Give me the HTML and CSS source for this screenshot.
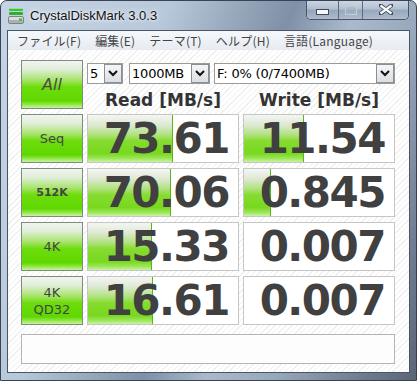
FILE: index.html
```html
<!DOCTYPE html>
<html>
<head>
<meta charset="utf-8">
<title>CrystalDiskMark 3.0.3</title>
<link rel="stylesheet" href="styles.css">
</head>
<body>
<div class="window">
  <div class="titlebar">
    <svg class="app-icon" width="16" height="16" viewBox="0 0 16 16">
      <rect x="1" y="0" width="14" height="3" rx="1" fill="#3cc23c"/>
      <rect x="1" y="0" width="14" height="1" fill="#8fe88f"/>
      <rect x="1" y="4" width="14" height="3" rx="1" fill="#2fae2f"/>
      <rect x="0.5" y="8.5" width="15" height="7" rx="1.5" fill="#d8dcdc" stroke="#7c8484"/>
      <rect x="1" y="12" width="14" height="3" fill="#a9b0b0"/>
      <rect x="11" y="10.5" width="3" height="2" fill="#22c022"/>
    </svg>
    <span class="title">CrystalDiskMark 3.0.3</span>
    <div class="caption">
      <div class="cbtn cmin">
        <svg width="13" height="6" viewBox="0 0 13 6"><rect x="0.5" y="0.5" width="12" height="5" fill="#fff" stroke="#3b4252"/></svg>
      </div>
      <div class="cbtn cmax">
        <svg width="12" height="10" viewBox="0 0 12 10"><rect x="0.5" y="0.5" width="11" height="9" fill="none" stroke="#c9cfd8"/><rect x="2" y="3" width="8" height="5" fill="none" stroke="#aab2be"/></svg>
      </div>
      <div class="cbtn cclose">
        <svg width="14" height="11" viewBox="0 0 14 11"><path d="M1 1 L13 10 M13 1 L1 10" stroke="#3b4252" stroke-width="4" stroke-linecap="square"/><path d="M1.5 1.5 L12.5 9.5 M12.5 1.5 L1.5 9.5" stroke="#fff" stroke-width="2.2"/></svg>
      </div>
    </div>
  </div>
  <div class="client">
    <div class="menubar">
      <span class="menu-item">ファイル(F)</span>
      <span class="menu-item">編集(E)</span>
      <span class="menu-item">テーマ(T)</span>
      <span class="menu-item">ヘルプ(H)</span>
      <span class="menu-item">言語(Language)</span>
    </div>
    <div class="content">
      <div class="grid">
        <div class="tbtn lbl-all">All</div>
        <div class="topbar">
          <div class="controls">
            <div class="combo combo-count"><span class="combo-text">5</span><span class="drop"><svg width="10" height="7" viewBox="0 0 10 7"><polyline points="1,1 5,5 9,1" fill="none" stroke="#111" stroke-width="2"/></svg></span></div>
            <div class="combo combo-size"><span class="combo-text">1000MB</span><span class="drop"><svg width="10" height="7" viewBox="0 0 10 7"><polyline points="1,1 5,5 9,1" fill="none" stroke="#111" stroke-width="2"/></svg></span></div>
            <div class="combo combo-drive"><span class="combo-text">F: 0% (0/7400MB)</span><span class="drop"><svg width="10" height="7" viewBox="0 0 10 7"><polyline points="1,1 5,5 9,1" fill="none" stroke="#111" stroke-width="2"/></svg></span></div>
          </div>
          <div class="heads">
            <div class="head">Read [MB/s]</div>
            <div class="head">Write [MB/s]</div>
          </div>
        </div>

        <div class="tbtn lbl-seq">Seq</div>
        <div class="cell"><div class="bar" style="width:85px"></div><span class="val">73.61</span></div>
        <div class="cell"><div class="bar" style="width:60px"></div><span class="val">11.54</span></div>

        <div class="tbtn lbl-512">512K</div>
        <div class="cell"><div class="bar" style="width:83px"></div><span class="val">70.06</span></div>
        <div class="cell"><div class="bar" style="width:27px"></div><span class="val">0.845</span></div>

        <div class="tbtn lbl-4k">4K</div>
        <div class="cell"><div class="bar" style="width:64px"></div><span class="val">15.33</span></div>
        <div class="cell"><span class="val">0.007</span></div>

        <div class="tbtn lbl-qd">4K<br>QD32</div>
        <div class="cell"><div class="bar" style="width:65px"></div><span class="val">16.61</span></div>
        <div class="cell"><span class="val">0.007</span></div>
      </div>
      <div class="comment"></div>
    </div>
  </div>
</div>
</body>
</html>
```

FILE: styles.css
```css
html, body {
  margin: 0;
  padding: 0;
}
body {
  width: 417px;
  height: 381px;
  overflow: hidden;
  background: #ffffff;
}
.window {
  width: 417px;
  height: 381px;
  box-sizing: border-box;
  border: 1px solid #3a4354;
  border-radius: 7px 7px 0 0;
  background: linear-gradient(112deg, #c6d5e5 0%, #b7c8da 30%, #8e9eb3 46%, #7f90a7 52%, #aab9cc 63%, #98a8bc 75%, #6f7c91 90%, #5b6577 100%);
  display: flex;
  flex-direction: column;
  overflow: hidden;
}
.titlebar {
  height: 29px;
  display: flex;
  align-items: flex-start;
  padding-left: 7px;
}
.app-icon {
  margin-top: 7px;
  flex: none;
}
.title {
  margin-left: 6px;
  margin-top: 7px;
  font-family: "Liberation Sans", Arial, sans-serif;
  font-size: 13px;
  line-height: 16px;
  color: #111;
  text-shadow: 0 0 6px rgba(255,255,255,0.95), 0 0 3px rgba(255,255,255,0.9);
}
.caption {
  margin-left: auto;
  margin-right: 7px;
  margin-top: -1px;
  height: 19px;
  display: flex;
  border: 1px solid #4b5466;
  border-top: none;
  border-radius: 0 0 5px 5px;
  overflow: hidden;
  box-shadow: inset 0 0 0 1px rgba(255,255,255,0.35);
}
.cbtn {
  height: 19px;
  display: flex;
  align-items: center;
  justify-content: center;
  background: linear-gradient(#d3dce8 0%, #b6c3d4 45%, #98a8bd 55%, #aebcce 100%);
  opacity: 0.92;
}
.cmin { width: 31px; border-right: 1px solid #58627a; }
.cmin svg { margin-top: 5px; }
.cmax { width: 23px; border-right: 1px solid #58627a; }
.cclose { width: 45px; }

.client {
  margin-left: 6px;
  width: 403px;
  height: 343px;
  box-sizing: border-box;
  border: 1px solid #4c5565;
  display: flex;
  flex-direction: column;
  background: #fff;
}
.menubar {
  height: 19px;
  flex: none;
  display: flex;
  align-items: center;
  padding-left: 2px;
  background: linear-gradient(#f6f8fb, #e6ebf2);
  font-family: "Noto Sans CJK JP", "Liberation Sans", sans-serif;
  font-size: 12px;
  color: #444;
}
.menu-item {
  padding: 0 7px;
  line-height: 19px;
  letter-spacing: 0.2px;
}
.content {
  height: 322px;
  box-sizing: border-box;
  padding: 10px 0 0 13px;
  background: repeating-linear-gradient(135deg, #ffffff 0 3px, #efefef 3px 4px);
}
.grid {
  display: grid;
  grid-template-columns: 62px 152px 152px;
  grid-auto-rows: 49px;
  column-gap: 4px;
  row-gap: 5px;
}
.tbtn {
  box-sizing: border-box;
  border: 1px solid #7e8c7e;
  background: linear-gradient(#f2f4f2 0%, #dfeed6 18%, #a8e46c 40%, #6ddc0c 55%, #5fd800 85%, #8ee640 92%, #c8f2a4 100%);
  display: flex;
  align-items: center;
  justify-content: center;
  text-align: center;
  font-family: "DejaVu Sans", sans-serif;
  color: #444;
}
.lbl-all { font-size: 16px; font-style: italic; color: #4a4a4a; }
.lbl-seq { font-size: 13px; }
.lbl-512 { font-size: 11px; font-weight: bold; }
.lbl-4k { font-size: 13px; }
.lbl-qd { font-size: 13px; line-height: 17px; }

.topbar {
  grid-column: 2 / 4;
  display: flex;
  flex-direction: column;
}
.controls {
  margin-top: 3px;
  height: 21px;
  display: flex;
}
.combo {
  box-sizing: border-box;
  height: 21px;
  border: 1px solid #9b9b9b;
  background: #fff;
  display: flex;
  align-items: center;
  font-family: "DejaVu Sans", sans-serif;
  font-size: 13px;
  color: #000;
}
.combo-count { width: 36px; }
.combo-size { width: 81px; margin-left: 6px; }
.combo-drive { width: 181px; margin-left: 4px; }
.combo-text {
  flex: 1;
  padding-left: 2px;
  letter-spacing: -0.2px;
  white-space: nowrap;
  overflow: hidden;
}
.drop {
  box-sizing: border-box;
  width: 18px;
  height: 19px;
  border: 1px solid #8a8f96;
  background: linear-gradient(#f4f5f6, #dcdfe3);
  display: flex;
  align-items: center;
  justify-content: center;
}
.heads {
  margin-top: 6px;
  display: grid;
  grid-template-columns: 152px 152px;
  column-gap: 4px;
}
.head {
  text-align: center;
  line-height: 20px;
  font-family: "DejaVu Sans", sans-serif;
  font-weight: bold;
  font-size: 17px;
  color: #333;
}
.cell {
  position: relative;
  box-sizing: border-box;
  border: 1px solid #c6c6c6;
  background: #fff;
  display: flex;
  align-items: center;
  justify-content: flex-end;
  padding-right: 9px;
  overflow: hidden;
}
.bar {
  position: absolute;
  left: 0;
  top: 0;
  bottom: 0;
  box-sizing: border-box;
  border-right: 1px solid #5cb518;
  background: linear-gradient(#f4f6f2 0%, #dfe9d6 20%, #b0e27e 42%, #86dc30 55%, #78d81e 82%, #9ae656 92%, #ccf2a6 100%);
}
.val {
  position: relative;
  font-family: "DejaVu Sans", sans-serif;
  font-weight: bold;
  font-size: 42px;
  letter-spacing: -1.5px;
  line-height: 46px;
  color: #404040;
}
.comment {
  margin-top: 9px;
  width: 374px;
  height: 30px;
  box-sizing: border-box;
  border: 1px solid #b4b4b4;
  background: #fdfdfd;
}
```
